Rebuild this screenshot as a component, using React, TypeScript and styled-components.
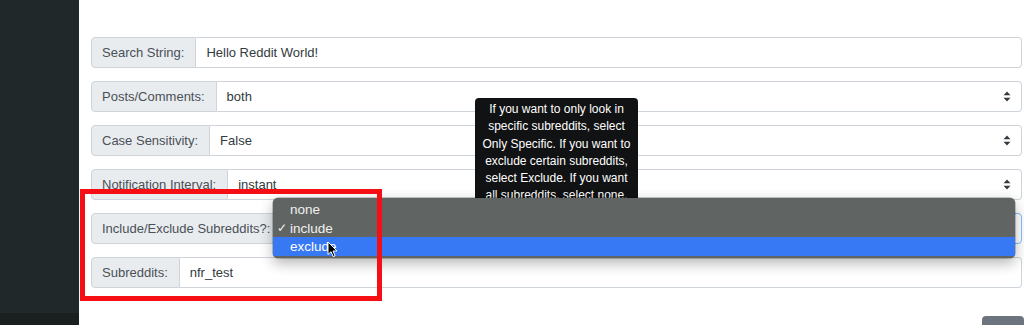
import React from "react";
import styled, { createGlobalStyle } from "styled-components";

const GlobalStyle = createGlobalStyle`
  html, body { margin: 0; padding: 0; background: #ffffff; }
  body { font-family: "Liberation Sans", Arial, Helvetica, sans-serif; }
  * { box-sizing: border-box; }
`;

const Page = styled.div`
  position: relative;
  display: flex;
  width: 1024px;
  height: 325px;
  overflow: hidden;
  background: #ffffff;
`;

const Sidebar = styled.aside`
  width: 79px;
  flex: none;
  display: flex;
  flex-direction: column;
  background: #212829;
`;

const SidebarFill = styled.div`
  flex: 1;
`;

const SidebarFoot = styled.div`
  height: 12px;
  background: #1a1f20;
`;

const Main = styled.main`
  flex: 1;
  display: flex;
  flex-direction: column;
  padding: 37px 2px 0 12px;
`;

const Form = styled.div`
  display: flex;
  flex-direction: column;
  gap: 13px;
  flex: none;
`;

const Row = styled.div`
  display: flex;
  flex: none;
  height: 31px;
  font-size: 13px;
`;

const Label = styled.div`
  display: flex;
  align-items: center;
  padding: 0 11px 0 10px;
  background: #e9ecef;
  border: 1px solid #ced4da;
  border-radius: 4px 0 0 4px;
  color: #495057;
  white-space: nowrap;
`;

const Field = styled.div<{ $focus?: boolean }>`
  flex: 1;
  display: flex;
  align-items: center;
  justify-content: space-between;
  padding: 0 10px 0 10px;
  border: 1px solid ${(p) => (p.$focus ? "#80bdff" : "#ced4da")};
  border-left: ${(p) => (p.$focus ? "1px solid #80bdff" : "none")};
  border-radius: 0 4px 4px 0;
  color: #333a40;
  background: #ffffff;
`;

const Footer = styled.div`
  display: flex;
  flex: none;
  justify-content: flex-end;
  margin-top: 28px;
  margin-right: -2px;
`;

const Button = styled.div`
  width: 42px;
  height: 20px;
  background: #6c757d;
  border-radius: 4px 4px 0 0;
`;

const Tooltip = styled.div`
  position: absolute;
  left: 475px;
  top: 98px;
  width: 163px;
  padding: 3px 4px 6px;
  background: #111213;
  color: #ffffff;
  border-radius: 4px;
  font-size: 12px;
  line-height: 17.3px;
  text-align: center;
  z-index: 2;
`;

const TipLine = styled.span`
  display: block;
  white-space: nowrap;
`;

const Menu = styled.div`
  position: absolute;
  left: 273px;
  top: 198px;
  width: 742px;
  padding: 2px 0;
  background: #606563;
  border-radius: 5px;
  box-shadow: 0 5px 14px rgba(0, 0, 0, 0.3), 0 0 0 0.5px rgba(0, 0, 0, 0.4);
  z-index: 3;
  font-size: 13.5px;
  color: #f2f2f2;
`;

const MenuItem = styled.div<{ $active?: boolean }>`
  display: flex;
  align-items: center;
  height: 18.7px;
  background: ${(p) => (p.$active ? "#3779f5" : "transparent")};
  color: ${(p) => (p.$active ? "#ffffff" : "#f0f0f0")};
`;

const CheckSlot = styled.span`
  width: 17px;
  padding-left: 4px;
  font-size: 12px;
`;

const Annotation = styled.div`
  position: absolute;
  left: 80px;
  top: 189px;
  width: 302px;
  height: 112px;
  border: 5px solid #f50f14;
  z-index: 4;
`;

const Cursor = styled.svg`
  position: absolute;
  left: 327px;
  top: 241px;
  z-index: 5;
`;

const SelectArrows = () => (
  <svg width="8" height="11" viewBox="0 0 8 11">
    <path d="M4 0.5 L7.5 4.3 L0.5 4.3 Z" fill="#343a40" />
    <path d="M4 10.5 L7.5 6.7 L0.5 6.7 Z" fill="#343a40" />
  </svg>
);

type RowData = { label: string; value: string; select?: boolean; focus?: boolean };

const rows: RowData[] = [
  { label: "Search String:", value: "Hello Reddit World!" },
  { label: "Posts/Comments:", value: "both", select: true },
  { label: "Case Sensitivity:", value: "False", select: true },
  { label: "Notification Interval:", value: "instant", select: true },
  { label: "Include/Exclude Subreddits?:", value: "", select: true, focus: true },
  { label: "Subreddits:", value: "nfr_test" },
];

const tipLines = [
  "If you want to only look in",
  "specific subreddits, select",
  "Only Specific. If you want to",
  "exclude certain subreddits,",
  "select Exclude. If you want",
  "all subreddits, select none.",
];

const options = [
  { text: "none", checked: false, active: false },
  { text: "include", checked: true, active: false },
  { text: "exclude", checked: false, active: true },
];

export default function App() {
  return (
    <>
      <GlobalStyle />
      <Page>
        <Sidebar>
          <SidebarFill />
          <SidebarFoot />
        </Sidebar>
        <Main>
          <Form>
            {rows.map((r) => (
              <Row key={r.label}>
                <Label>{r.label}</Label>
                <Field $focus={r.focus}>
                  <span>{r.value}</span>
                  {r.select && <SelectArrows />}
                </Field>
              </Row>
            ))}
          </Form>
          <Footer>
            <Button />
          </Footer>
        </Main>

        <Tooltip>
          {tipLines.map((l) => (
            <TipLine key={l}>{l}</TipLine>
          ))}
        </Tooltip>

        <Menu>
          {options.map((o) => (
            <MenuItem key={o.text} $active={o.active}>
              <CheckSlot>{o.checked ? "✓" : ""}</CheckSlot>
              <span>{o.text}</span>
            </MenuItem>
          ))}
        </Menu>

        <Annotation />

        <Cursor width="12" height="17" viewBox="0 0 12 17">
          <path
            d="M1 1 L1 13.5 L4 10.7 L6.2 15.6 L8.1 14.8 L6 10 L10 10 Z"
            fill="#000000"
            stroke="#ffffff"
            strokeWidth="1"
            strokeLinejoin="round"
          />
        </Cursor>
      </Page>
    </>
  );
}
